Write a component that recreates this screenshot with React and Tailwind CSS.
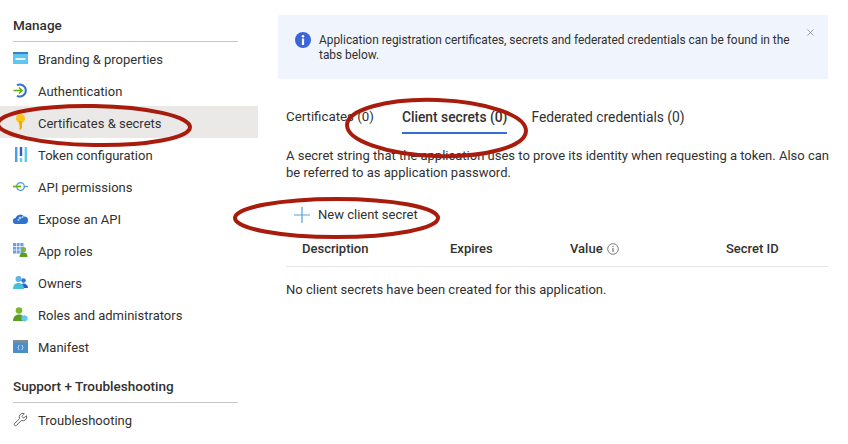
import React from "react"
import { X, Wrench } from "lucide-react"

function BrandingIcon() {
  return (
    <svg width="15" height="13" viewBox="0 0 15 13">
      <rect x="0" y="0" width="15" height="12" fill="#5ec6f0" />
      <rect x="0" y="0" width="15" height="2" fill="#3b7fc9" />
      <rect x="2.500" y="6" width="10" height="2" fill="#e4f6ff" />
    </svg>
  )
}

function AuthIcon() {
  return (
    <svg width="15" height="15" viewBox="0 0 15 15" fill="none">
      <path d="M4 2.200A6 6 0 1 1 4 12.800" stroke="#2f72d0" strokeWidth="2" />
      <path d="M0.500 7.500H9M6 4.500l3 3-3 3" stroke="#5db300" strokeWidth="1.500" />
    </svg>
  )
}

function KeyIcon() {
  return (
    <svg width="11" height="16" viewBox="0 0 11 16">
      <circle cx="5.500" cy="4.500" r="4.500" fill="#fcc419" />
      <path d="M4 7h3v6.500L5.500 16 4 14.500l1-1-1-1 1-1-1-1z" fill="#f2a900" />
    </svg>
  )
}

function TokenIcon() {
  return (
    <svg width="12" height="15" viewBox="0 0 12 15">
      <rect x="0" y="0" width="2.400" height="15" fill="#4a9de8" />
      <rect x="4.800" y="0" width="2.400" height="9" fill="#2f5fc0" />
      <rect x="4.800" y="11" width="2.400" height="4" fill="#5fd0ee" />
      <rect x="9.600" y="0" width="2.400" height="15" fill="#5fc8ef" />
    </svg>
  )
}

function ApiIcon() {
  return (
    <svg width="15" height="11" viewBox="0 0 15 11" fill="none">
      <circle cx="7.500" cy="5.500" r="3.800" stroke="#4a9de8" strokeWidth="1.300" />
      <path d="M0 5.500H8" stroke="#6bb300" strokeWidth="1.800" />
      <path d="M11 5.500H15" stroke="#4a9de8" strokeWidth="1.300" />
    </svg>
  )
}

function CloudIcon() {
  return (
    <svg width="15" height="11" viewBox="0 0 15 11">
      <path d="M3 11A3 3 0 0 1 2.600 5 4.800 4.800 0 0 1 11 3.400 3.800 3.800 0 0 1 11.500 11Z" fill="#2f72d0" />
      <circle cx="7" cy="5" r="1.300" fill="#a9d3f5" />
      <circle cx="9.500" cy="4" r="1.100" fill="#a9d3f5" />
      <circle cx="5.400" cy="7" r="1" fill="#a9d3f5" />
    </svg>
  )
}

function AppRolesIcon() {
  return (
    <svg width="15" height="14" viewBox="0 0 15 14">
      <rect x="0" y="0" width="10.500" height="10.500" fill="#6f9ee8" />
      <path d="M3.500 0v10.500M7 0v10.500M0 3.500h10.500M0 7h10.500" stroke="#ffffff" strokeWidth="0.700" />
      <circle cx="10.500" cy="6.500" r="2.600" fill="#7cb82f" />
      <path d="M6.500 14c0-3 1.700-4.500 4-4.500s4 1.500 4 4.500z" fill="#5a9e1f" />
    </svg>
  )
}

function OwnersIcon() {
  return (
    <svg width="15" height="13" viewBox="0 0 15 13">
      <circle cx="10.500" cy="4.500" r="2.300" fill="#2f72d0" />
      <path d="M7 12c0-3 1.500-4.500 3.500-4.500S15 9 15 12z" fill="#2f5fc0" />
      <circle cx="5.500" cy="3" r="3" fill="#5ab4e8" />
      <path d="M0 13c0-4 2.200-6 5.500-6S11 9 11 13z" fill="#45c0dc" />
    </svg>
  )
}

function RolesIcon() {
  return (
    <svg width="15" height="15" viewBox="0 0 15 15">
      <circle cx="6" cy="3.500" r="3.300" fill="#7cb82f" />
      <path d="M0 14c0-4 2.400-6.500 6-6.500s6 2.500 6 6.500z" fill="#5a9e1f" />
      <path d="M11.500 8l3 1.700v3.300l-3 1.700-3-1.700V9.700z" fill="#5fc8ef" />
    </svg>
  )
}

function ManifestIcon() {
  return (
    <svg width="15" height="13" viewBox="0 0 15 13">
      <rect x="0" y="0" width="15" height="13" fill="#4a8fcb" />
      <rect x="0" y="0" width="15" height="2.400" fill="#8a8a8a" />
      <path d="M6.200 5 5 7.500 6.200 10M8.800 5 10 7.500 8.800 10" fill="none" stroke="#d8ecfb" strokeWidth="0.800" />
    </svg>
  )
}

function InfoFilled() {
  return (
    <svg width="16" height="16" viewBox="0 0 16 16">
      <circle cx="8" cy="8" r="8" fill="#3b64dd" />
      <circle cx="8" cy="4.300" r="1.200" fill="#ffffff" />
      <rect x="6.900" y="6.500" width="2.200" height="6.500" fill="#ffffff" />
    </svg>
  )
}

function InfoOutline() {
  return (
    <svg width="12" height="12" viewBox="0 0 12 12" fill="none">
      <circle cx="6" cy="6" r="5.300" stroke="#605e5c" strokeWidth="0.800" />
      <rect x="5.500" y="5" width="1" height="4" fill="#605e5c" />
      <rect x="5.500" y="3" width="1" height="1" fill="#605e5c" />
    </svg>
  )
}

function PlusIcon() {
  return (
    <svg width="16" height="16" viewBox="0 0 16 16" fill="none" stroke="#5c9fe0" strokeWidth="1.200">
      <path d="M8 0v16M0 8h16" />
    </svg>
  )
}

const navItems = [
  { label: "Branding & properties", icon: <BrandingIcon /> },
  { label: "Authentication", icon: <AuthIcon /> },
  { label: "Certificates & secrets", icon: <KeyIcon />, active: true },
  { label: "Token configuration", icon: <TokenIcon /> },
  { label: "API permissions", icon: <ApiIcon /> },
  { label: "Expose an API", icon: <CloudIcon /> },
  { label: "App roles", icon: <AppRolesIcon /> },
  { label: "Owners", icon: <OwnersIcon /> },
  { label: "Roles and administrators", icon: <RolesIcon /> },
  { label: "Manifest", icon: <ManifestIcon /> },
]

function NavRow({ label, icon, active }) {
  return (
    <div className={`flex items-center h-8 pl-[13px] ${active ? "bg-[#ebe9e7]" : ""}`}>
      <span className="w-[25px] flex items-center justify-start shrink-0">
        <span className="w-[15px] flex justify-center">{icon}</span>
      </span>
      <span className="pt-[4px]">{label}</span>
    </div>
  )
}

function Sidebar() {
  return (
    <aside className="w-[258px] shrink-0 pt-[16px]">
      <h2 className="ml-[13px] mr-[20px] h-[26px] border-b border-[#c8c6c4] text-[13.5px] font-medium leading-[18px]">Manage</h2>
      <div>
        {navItems.map((item) => (
          <NavRow key={item.label} {...item} />
        ))}
      </div>
      <h2 className="ml-[13px] mr-[20px] mt-[14px] h-[27px] pt-[1px] border-b border-[#c8c6c4] text-[13.5px] font-medium leading-[18px]">
        Support + Troubleshooting
      </h2>
      <div>
        <NavRow label="Troubleshooting" icon={<Wrench size={17} strokeWidth={1.200} className="text-[#323130]" />} />
      </div>
    </aside>
  )
}

function Main() {
  return (
    <main className="w-[550px] ml-[20px] pt-[15px]">
      <div className="relative h-[64px] bg-[#eff4fd] rounded-[2px] flex pl-[17px] pt-[17px]">
        <span className="mr-[8px] shrink-0">
          <InfoFilled />
        </span>
        <p className="w-[480px] text-[11.9px] leading-[15px] pt-[1px]">
          Application registration certificates, secrets and federated credentials can be found in the tabs below.
        </p>
        <X size={11} strokeWidth={1.200} className="absolute right-[12px] top-[12px] text-[#605e5c]" />
      </div>

      <div className="flex mt-[29px] pl-[8px] h-[26px] items-start text-[13.8px] leading-[18px]">
        <span className="mr-[28px] text-[13.3px]">Certificates (0)</span>
        <span className="font-medium h-[26px] border-b-2 border-[#2f6fd6] mr-[24px]">Client secrets (0)</span>
        <span>Federated credentials (0)</span>
      </div>

      <p className="mt-[13px] ml-[8px] leading-[17px] w-[545px]">
        A secret string that the application uses to prove its identity when requesting a token. Also can be referred to as application password.
      </p>

      <div className="flex items-center ml-[16px] mt-[22px] h-[24px]">
        <span className="mr-[8px]">
          <PlusIcon />
        </span>
        <span>New client secret</span>
      </div>

      <div className="ml-[8px] mt-[8px] h-[32px] border-b border-[#e5e5e5] grid grid-cols-[164px_120px_156px_1fr] items-start font-medium leading-[18px] pt-[5px]">
        <span className="pl-[16px]">Description</span>
        <span>Expires</span>
        <span className="flex items-center gap-[4px]">
          Value
          <InfoOutline />
        </span>
        <span>Secret ID</span>
      </div>

      <p className="ml-[8px] mt-[14px] leading-[18px]">No client secrets have been created for this application.</p>
    </main>
  )
}

export default function App() {
  return (
    <div className="relative w-[848px] h-[444px] overflow-hidden bg-white flex text-[13px] text-[#323130] font-['Roboto',sans-serif]">
      <Sidebar />
      <Main />
      {/* hand-drawn red rings over the screenshot */}
      <svg className="absolute inset-0 pointer-events-none" width="848" height="444" fill="none" stroke="#a81c0e" strokeWidth="4">
        <ellipse cx="94" cy="125.500" rx="96" ry="19.500" transform="rotate(1 94 125.500)" />
        <ellipse cx="436.500" cy="128" rx="89.500" ry="28" transform="rotate(2 436.500 128)" />
        <ellipse cx="336.500" cy="218" rx="101.500" ry="19" />
      </svg>
    </div>
  )
}
